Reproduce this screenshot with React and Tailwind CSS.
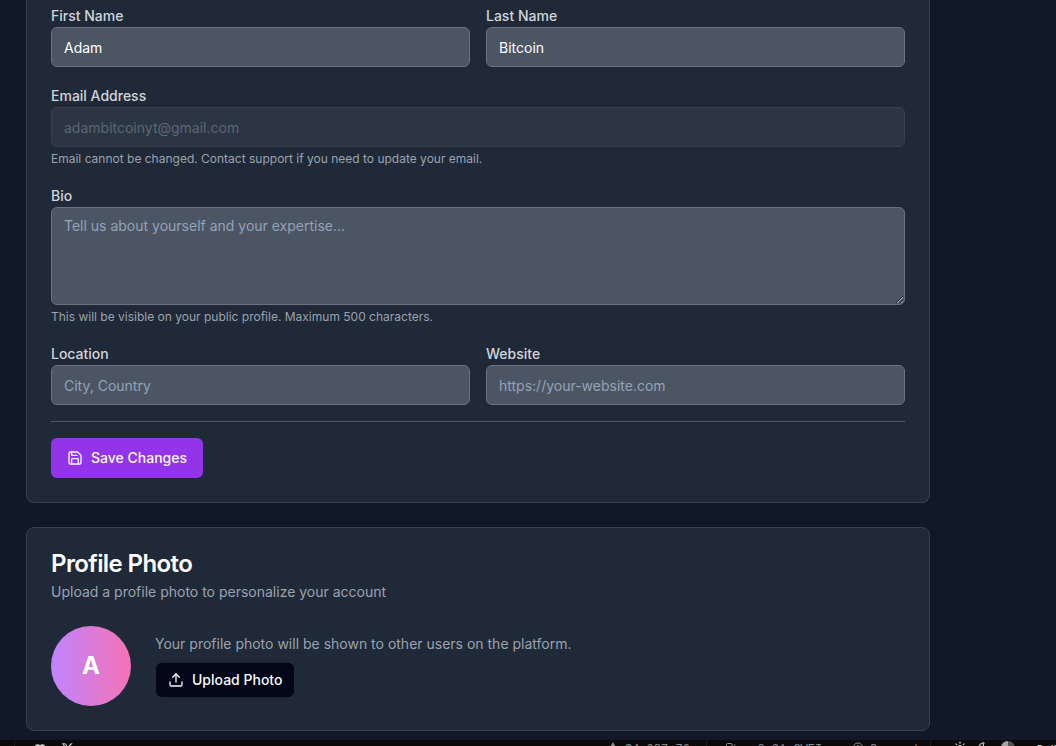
import React, { useState } from 'react'
import { Save, Upload, Fuel, Sun, Moon, CircleUser } from 'lucide-react'
import { FaDiscord, FaEthereum } from 'react-icons/fa'
import { FaXTwitter } from 'react-icons/fa6'

const fieldStyle = "block w-full rounded-md border border-[#6b7280] bg-[#4b5563] px-3 py-2 text-sm text-white placeholder:text-[#94a3b8]"

const Field = ({ id, label, hint, children }) => {
  return (
    <div>
      <div className="h-6 leading-6">
        <label htmlFor={id} className="text-sm font-medium text-[#d1d5db]">{label}</label>
      </div>
      {children}
      {hint && <p className="mt-1 text-xs text-[#9ca3af]">{hint}</p>}
    </div>
  )
}

const ProfileForm = () => {

  const [firstName, setFirstName] = useState("Adam")
  const [lastName, setLastName] = useState("Bitcoin")
  const [bio, setBio] = useState("")
  const [location, setLocation] = useState("")
  const [website, setWebsite] = useState("")

  return (
    <form
      className="rounded-b-lg border border-t-0 border-[#374151] bg-[#1f2937] px-6 pt-[3px] pb-6"
      onSubmit={(e) => e.preventDefault()}
    >
      <div className="flex flex-col gap-4">

        <div className="grid grid-cols-2 gap-4">
          <Field id="firstName" label="First Name">
            <input id="firstName" type="text" className={`${fieldStyle} h-10`}
              value={firstName} onChange={(e) => setFirstName(e.target.value)} />
          </Field>
          <Field id="lastName" label="Last Name">
            <input id="lastName" type="text" className={`${fieldStyle} h-10`}
              value={lastName} onChange={(e) => setLastName(e.target.value)} />
          </Field>
        </div>

        <Field id="email" label="Email Address" hint="Email cannot be changed. Contact support if you need to update your email.">
          <input
            id="email"
            type="email"
            disabled
            value="adambitcoinyt@gmail.com"
            className="block h-10 w-full rounded-md border border-[#4b5563] bg-[#374151] px-3 py-2 text-sm text-[#9ca3af] opacity-50"
          />
        </Field>

        <Field id="bio" label="Bio" hint="This will be visible on your public profile. Maximum 500 characters.">
          <textarea id="bio" rows={4} maxLength={500} className={fieldStyle}
            placeholder="Tell us about yourself and your expertise..."
            value={bio} onChange={(e) => setBio(e.target.value)} />
        </Field>

        <div className="grid grid-cols-2 gap-4">
          <Field id="location" label="Location">
            <input id="location" type="text" placeholder="City, Country" className={`${fieldStyle} h-10`}
              value={location} onChange={(e) => setLocation(e.target.value)} />
          </Field>
          <Field id="website" label="Website">
            <input id="website" type="url" placeholder="https://your-website.com" className={`${fieldStyle} h-10`}
              value={website} onChange={(e) => setWebsite(e.target.value)} />
          </Field>
        </div>

        <div className="border-t border-[#4b5563] pt-4">
          <button type="submit" className="flex h-10 items-center gap-2 rounded-md bg-[#9333ea] px-4 text-sm font-medium text-[#f8fafc] hover:bg-[#7e22ce]">
            <Save size={16} />
            Save Changes
          </button>
        </div>

      </div>
    </form>
  )
}

const ProfilePhoto = () => {
  return (
    <section className="rounded-lg border border-[#374151] bg-[#1f2937] p-6">
      <h2 className="text-2xl leading-none font-semibold tracking-tight text-white">Profile Photo</h2>
      <p className="mt-1.5 text-sm text-[#9ca3af]">Upload a profile photo to personalize your account</p>

      <div className="mt-6 flex items-center gap-6">
        <div className="flex size-20 items-center justify-center rounded-full bg-linear-to-r/srgb from-[#c084fc] to-[#f472b6] text-2xl font-bold text-white">
          A
        </div>
        <div>
          <p className="mb-2 text-sm text-[#9ca3af]">Your profile photo will be shown to other users on the platform.</p>
          <button type="button" className="flex h-9 items-center gap-2 rounded-md border border-[#1e293b] bg-[#020617] bg-clip-padding px-3 text-sm font-medium text-[#f8fafc]">
            <Upload size={16} />
            Upload Photo
          </button>
        </div>
      </div>
    </section>
  )
}

const HalfCircle = () => {
  return (
    <svg width="14" height="14" viewBox="0 0 14 14">
      <circle cx="7" cy="7" r="7" fill="#525252" />
      <path d="M7 0a7 7 0 0 0 0 14z" fill="#a3a3a3" />
    </svg>
  )
}

const StatusBar = () => {
  return (
    <footer className="flex h-8 shrink-0 items-stretch justify-between bg-[#0a0a0a] pl-[14px] font-['Liberation_Mono',monospace] text-xs leading-5 text-[#8a8a8a]">
      <div className="flex gap-3.5 border-l border-[#1c1c1c] pt-0.5 pl-[18px] text-[#c4c4c4]">
        <a href="#discord" aria-label="Discord"><FaDiscord size={14} /></a>
        <a href="#x" aria-label="X"><FaXTwitter size={13} /></a>
      </div>

      <div className="flex">
        <span className="flex w-[99px] gap-1.5"><FaEthereum size={12} className="mt-0.5" /> $4,087.76</span>
        <span className="flex w-[146px] gap-1.5 border-l border-[#1c1c1c] pl-[18px]"><Fuel size={12} className="mt-0.5" /> · 2.21 GWEI</span>
        <a href="#support" className="flex w-[78px] gap-1.5"><CircleUser size={12} className="mt-0.5" /> Support</a>
        <div className="flex w-[105px] items-start gap-2.5 border-l border-[#1c1c1c] pt-px pl-[22px] text-[#c4c4c4]">
          <button type="button" aria-label="Light"><Sun size={14} /></button>
          <button type="button" aria-label="Dark"><Moon size={14} /></button>
          <button type="button" aria-label="Contrast"><HalfCircle /></button>
        </div>
        <a href="#calls" className="w-[21px] overflow-hidden font-[Inter,sans-serif] font-medium text-[#d4d4d4]">Calls</a>
      </div>
    </footer>
  )
}

const App = () => {
  return (
    <div className="flex h-screen flex-col overflow-hidden bg-[#111827] font-[Inter,sans-serif]">
      <main className="mr-[126px] ml-[26px] flex shrink-0 flex-col gap-6 pb-[9px]">
        <ProfileForm />
        <ProfilePhoto />
      </main>
      <StatusBar />
    </div>
  )
}

export default App
